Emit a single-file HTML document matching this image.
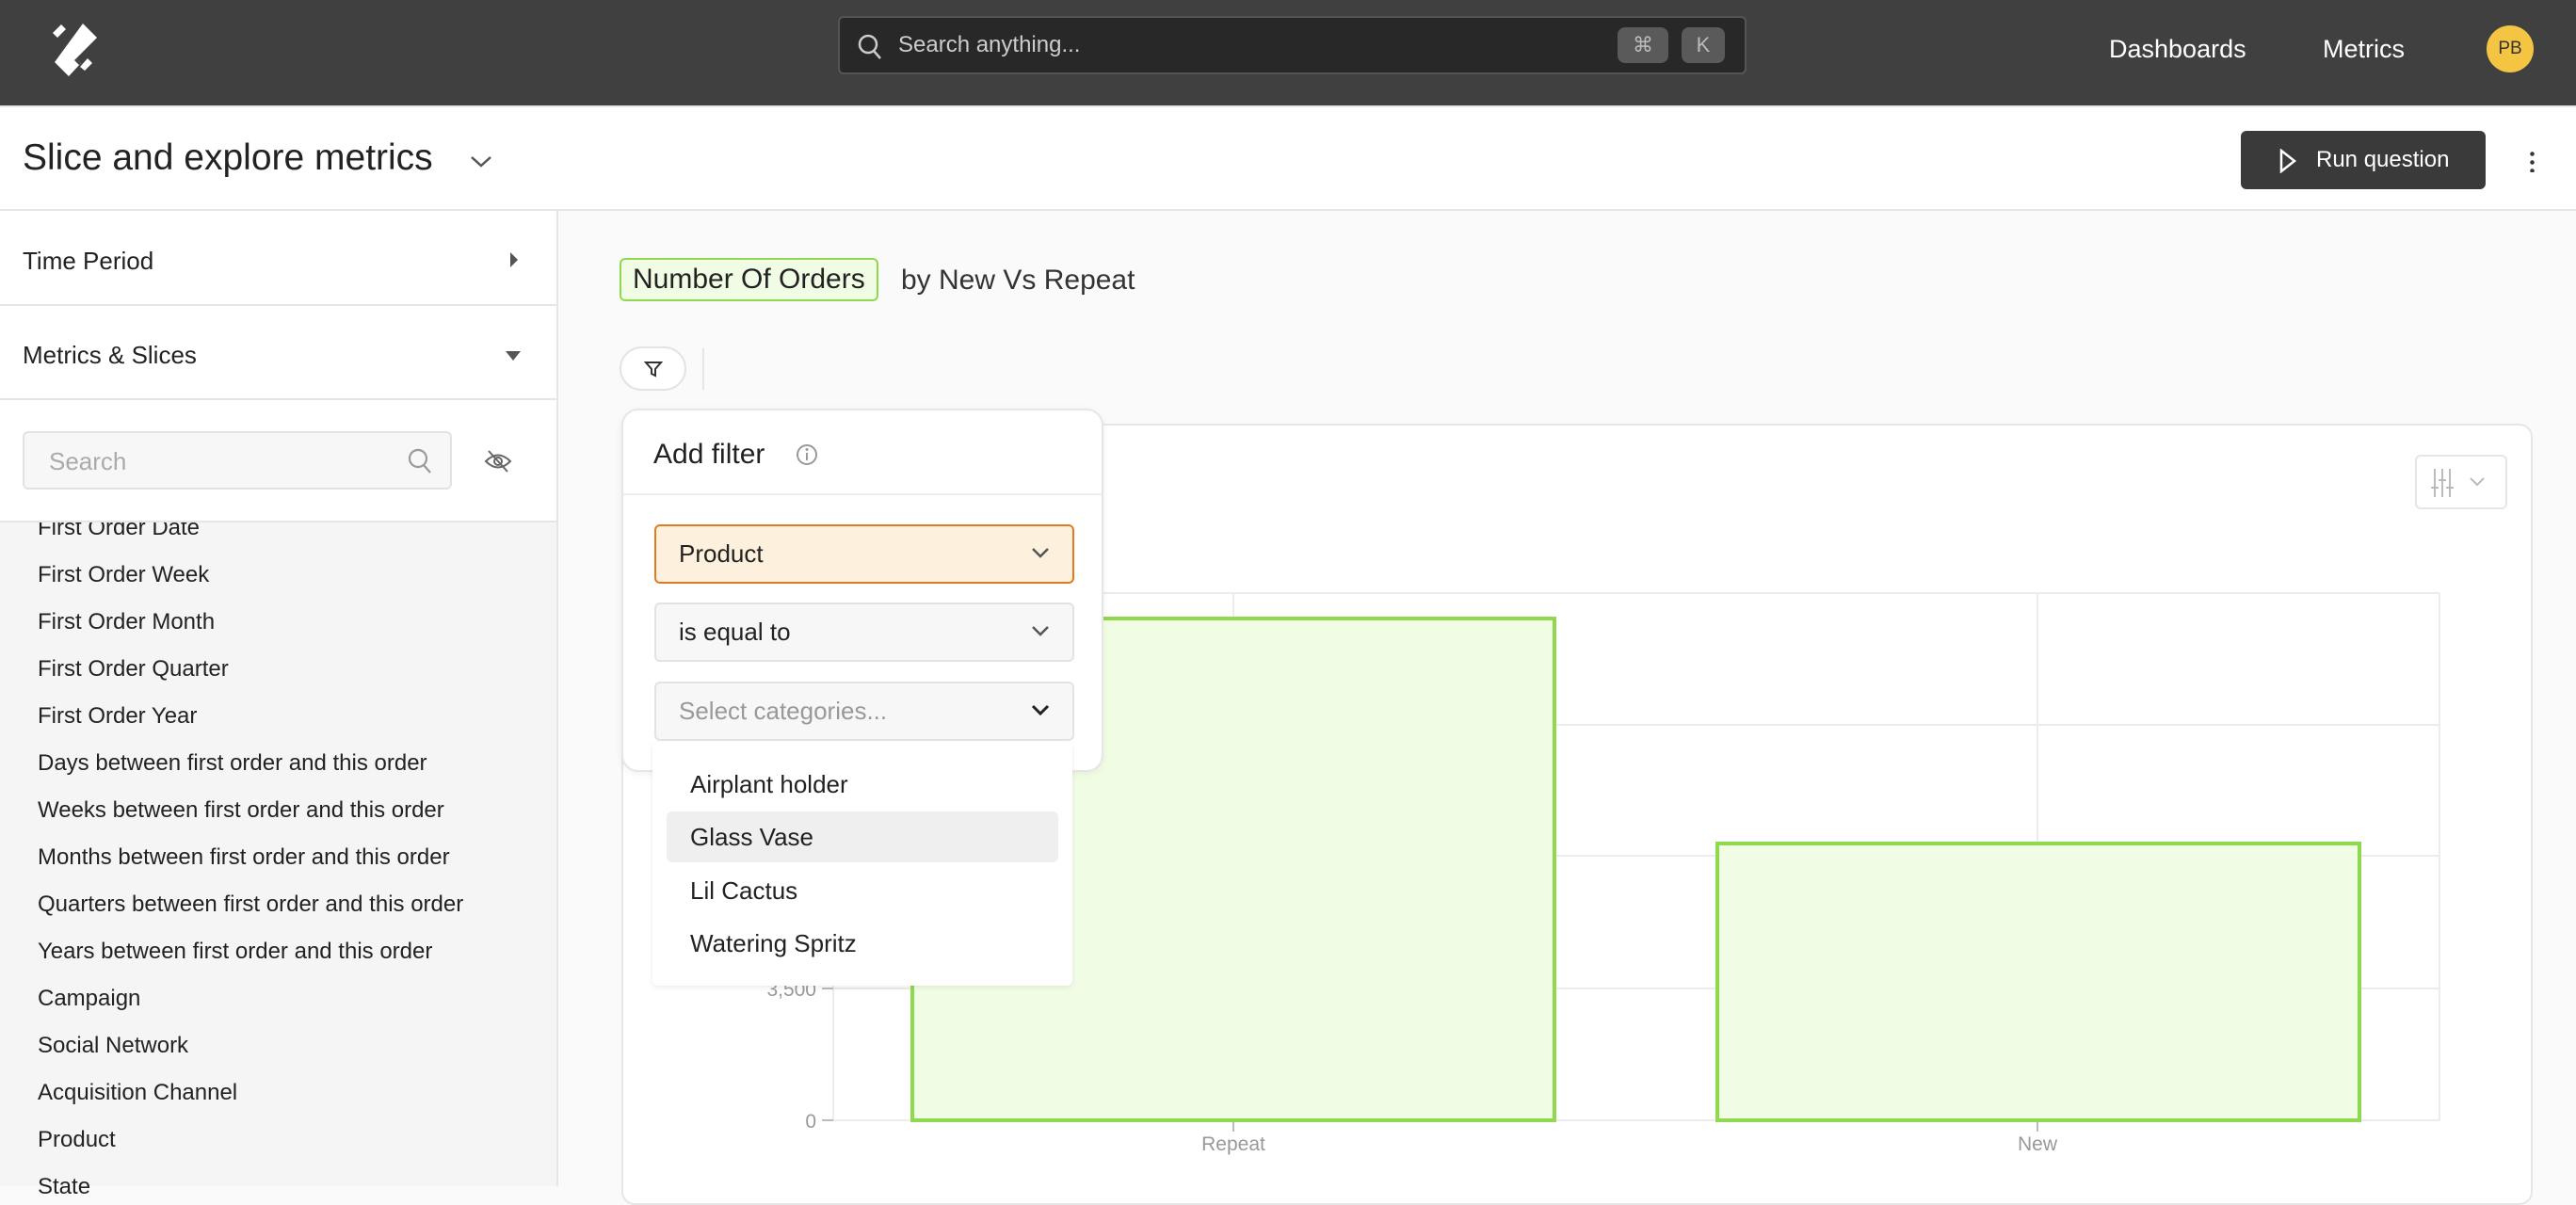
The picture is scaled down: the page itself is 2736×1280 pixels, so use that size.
<!DOCTYPE html>
<html><head><meta charset="utf-8"><style>
*{box-sizing:border-box;margin:0;padding:0}
body{width:2736px;height:1260px;overflow:hidden;font-family:"Liberation Sans",sans-serif;background:#fafafa;position:relative;color:#222}
.abs{position:absolute}
.hdr{left:0;top:0;width:2736px;height:112px;background:#404040}
.srch{left:890px;top:17px;width:965px;height:62px;background:#282828;border:2px solid #555;border-radius:6px}
.kbd{position:absolute;top:10px;height:38px;background:#5a5a5a;border-radius:8px;color:#bbb;font-size:22px;text-align:center;line-height:38px}
.nav{color:#fff;font-size:27px;top:36px}
.tbar{left:0;top:112px;width:2736px;height:112px;background:#fff;border-top:2px solid #e6e6e6;border-bottom:2px solid #e6e6e6}
.side{left:0;top:224px;width:593px;height:1036px;background:#f5f5f5;border-right:2px solid #e6e6e6}
.row{position:absolute;left:0;width:591px;background:#fff;border-bottom:2px solid #e6e6e6}
.row span{position:absolute;left:24px;font-size:26px}
.li{position:absolute;left:40px;font-size:24px;color:#222}
.card{left:660px;top:450px;width:2030px;height:830px;background:#fff;border:2px solid #e6e6e6;border-radius:14px}
.sel{position:absolute;left:33px;width:446px;height:63px;border:2px solid #e3e3e3;border-radius:6px;background:#f7f7f7;font-size:26px;line-height:59px;padding-left:24px}
.chev{position:absolute;right:24px;top:22px}
</style></head><body>
<div class="abs hdr"></div>
<svg class="abs" style="left:50px;top:20px" width="60" height="70" viewBox="50 20 60 70"><g fill="#fff"><polygon points="88,25 103,40 81,62 86,67 73,81 58,66"/><polygon points="56,35 65,26 70,31 61,40"/><polygon points="85,71 93,62 98,67 90,75"/></g><polygon points="81,62 86,67 84,69 79,64" fill="#404040"/></svg>
<div class="abs srch">
<svg class="abs" style="left:18px;top:16px" width="28" height="30" viewBox="0 0 28 30"><circle cx="12" cy="12" r="9" fill="none" stroke="#ccc" stroke-width="2.5"/><line x1="18" y1="19" x2="25" y2="27" stroke="#ccc" stroke-width="2.5"/></svg>
<div class="abs" style="left:62px;top:15px;color:#ccc;font-size:24px">Search anything...</div>
<div class="kbd" style="left:826px;width:54px">⌘</div>
<div class="kbd" style="left:894px;width:46px">K</div>
</div>
<div class="abs nav" style="left:2240px;top:37px">Dashboards</div>
<div class="abs nav" style="left:2467px;top:37px">Metrics</div>
<div class="abs" style="left:2641px;top:27px;width:50px;height:50px;border-radius:50%;background:#f4c542;font-size:19px;text-align:center;line-height:50px;color:#333">PB</div>

<div class="abs tbar">
<div class="abs" style="left:24px;top:32px;font-size:39px;color:#222">Slice and explore metrics</div>
<svg class="abs" style="left:498px;top:50px" width="26" height="16"><polyline points="3,3 13,12 23,3" fill="none" stroke="#555" stroke-width="2.5"/></svg>
<div class="abs" style="left:2380px;top:25px;width:260px;height:62px;background:#3a3a3a;border-radius:6px;color:#fff;font-size:24px;line-height:62px;padding-left:80px">Run question</div>
<svg class="abs" style="left:2420px;top:44px" width="20" height="26"><polygon points="3,2 17,13 3,24" fill="none" stroke="#fff" stroke-width="2.5"/></svg>
<div class="abs" style="left:2687px;top:45px;width:5px;height:24px;background:radial-gradient(circle,#333 2px,transparent 2.5px) 0 0/5px 9px"></div>
</div>

<div class="abs side">
<div class="row" style="top:0;height:101px"><span style="top:38px">Time Period</span><svg class="abs" style="left:540px;top:42px" width="12" height="20"><polygon points="2,2 10,10 2,18" fill="#555"/></svg></div>
<div class="row" style="top:101px;height:100px"><span style="top:37px">Metrics &amp; Slices</span><svg class="abs" style="left:535px;top:46px" width="20" height="14"><polygon points="2,2 18,2 10,12" fill="#555"/></svg></div>
<div class="row" style="top:201px;height:130px">
<div class="abs" style="left:24px;top:33px;width:456px;height:62px;background:#f7f7f7;border:2px solid #e3e3e3;border-radius:6px;color:#aaa;font-size:26px;line-height:60px;padding-left:26px">Search</div>
<svg class="abs" style="left:432px;top:50px" width="28" height="30"><circle cx="12" cy="12" r="9" fill="none" stroke="#999" stroke-width="2.2"/><line x1="18" y1="19" x2="25" y2="27" stroke="#999" stroke-width="2.2"/></svg>
<svg class="abs" style="left:514px;top:52px" width="30" height="26" viewBox="0 0 30 26"><path d="M2 13 Q15 0 28 13 Q15 26 2 13Z" fill="none" stroke="#666" stroke-width="2"/><circle cx="15" cy="13" r="4" fill="none" stroke="#666" stroke-width="2"/><line x1="5" y1="2" x2="25" y2="24" stroke="#666" stroke-width="2"/></svg>
</div>
<div class="li" style="top:323px;clip-path:inset(8px 0 0 0)">First Order Date</div>
<div class="li" style="top:373px">First Order Week</div>
<div class="li" style="top:423px">First Order Month</div>
<div class="li" style="top:473px">First Order Quarter</div>
<div class="li" style="top:523px">First Order Year</div>
<div class="li" style="top:573px">Days between first order and this order</div>
<div class="li" style="top:623px">Weeks between first order and this order</div>
<div class="li" style="top:673px">Months between first order and this order</div>
<div class="li" style="top:723px">Quarters between first order and this order</div>
<div class="li" style="top:773px">Years between first order and this order</div>
<div class="li" style="top:823px">Campaign</div>
<div class="li" style="top:873px">Social Network</div>
<div class="li" style="top:923px">Acquisition Channel</div>
<div class="li" style="top:973px">Product</div>
<div class="li" style="top:1023px">State</div>
</div>

<div class="abs" style="left:658px;top:274px;height:46px;padding:0 12px;background:#f0fde4;border:2px solid #8fd94f;border-radius:6px;font-size:30px;line-height:42px">Number Of Orders</div>
<div class="abs" style="left:957px;top:281px;font-size:30px;color:#333">by New Vs Repeat</div>
<div class="abs" style="left:658px;top:368px;width:71px;height:47px;border:2px solid #e3e3e3;border-radius:24px;background:#fff"></div>
<svg class="abs" style="left:684px;top:382px" width="20" height="20"><path d="M2 3 H18 L12 10 V17 L8 15 V10Z" fill="none" stroke="#333" stroke-width="2"/></svg>
<div class="abs" style="left:746px;top:370px;width:2px;height:44px;background:#e6e6e6"></div>

<div class="abs card">
<div class="abs" style="left:1903px;top:31px;width:98px;height:58px;border:2px solid #e6e6e6;border-radius:6px"></div>
<svg class="abs" style="left:1918px;top:44px" width="70" height="34"><g stroke="#bbb" stroke-width="2" fill="none"><line x1="6" y1="2" x2="6" y2="32"/><line x1="14" y1="2" x2="14" y2="32"/><line x1="22" y1="2" x2="22" y2="32"/><line x1="2" y1="22" x2="10" y2="22"/><line x1="10" y1="14" x2="18" y2="14"/><line x1="18" y1="22" x2="26" y2="22"/><polyline points="44,12 51,19 58,12"/></g></svg>
</div>
<svg class="abs" style="left:0;top:0" width="2736" height="1260">
<g stroke="#ececec" stroke-width="2"><line x1="885" y1="630" x2="2591" y2="630"/><line x1="885" y1="770" x2="2591" y2="770"/><line x1="885" y1="909" x2="2591" y2="909"/><line x1="885" y1="1050" x2="2591" y2="1050"/><line x1="885" y1="1190" x2="2591" y2="1190"/><line x1="1310" y1="630" x2="1310" y2="1190"/><line x1="2164" y1="630" x2="2164" y2="1190"/><line x1="2591" y1="630" x2="2591" y2="1190"/><line x1="885" y1="630" x2="885" y2="1190"/></g>
<g stroke="#bbb" stroke-width="2"><line x1="873" y1="1050" x2="885" y2="1050"/><line x1="873" y1="1190" x2="885" y2="1190"/><line x1="1310" y1="1190" x2="1310" y2="1202"/><line x1="2164" y1="1190" x2="2164" y2="1202"/></g>
<rect x="969" y="657" width="682" height="533" fill="#f0fde4" stroke="#8fd94f" stroke-width="4"/>
<rect x="1824" y="896" width="682" height="294" fill="#f0fde4" stroke="#8fd94f" stroke-width="4"/>
<g fill="#999" font-size="21" font-family="Liberation Sans"><text x="867" y="1058" text-anchor="end">3,500</text><text x="867" y="1198" text-anchor="end">0</text><text x="1310" y="1222" text-anchor="middle">Repeat</text><text x="2164" y="1222" text-anchor="middle">New</text></g>
</svg>

<div class="abs" style="left:660px;top:434px;width:512px;height:386px;background:#fff;border:2px solid #e6e6e6;border-radius:18px;box-shadow:0 2px 8px rgba(0,0,0,.06)">
<div class="abs" style="left:32px;top:30px;font-size:30px">Add filter</div>
<svg class="abs" style="left:182px;top:34px" width="26" height="26"><circle cx="13" cy="13" r="10" fill="none" stroke="#999" stroke-width="2"/><line x1="13" y1="11" x2="13" y2="19" stroke="#999" stroke-width="2"/><circle cx="13" cy="7.5" r="1.5" fill="#999"/></svg>
<div class="abs" style="left:0;top:88px;width:508px;height:2px;background:#eee"></div>
<div class="sel" style="top:121px;background:#fdf0dc;border-color:#e07b24">Product<svg class="chev" width="20" height="14"><polyline points="2,2 10,10 18,2" fill="none" stroke="#555" stroke-width="2.5"/></svg></div>
<div class="sel" style="top:204px">is equal to<svg class="chev" width="20" height="14"><polyline points="2,2 10,10 18,2" fill="none" stroke="#555" stroke-width="2.5"/></svg></div>
<div class="sel" style="top:288px;color:#999">Select categories...<svg class="chev" width="20" height="14"><polyline points="2,2 10,10 18,2" fill="none" stroke="#222" stroke-width="3"/></svg></div>
</div>
<div class="abs" style="left:693px;top:789px;width:446px;height:258px;background:#fff;border-radius:6px;box-shadow:0 2px 6px rgba(0,0,0,.08)">
<div class="abs" style="left:15px;top:73px;width:416px;height:54px;background:#efefef;border-radius:6px"></div>
<div class="abs" style="left:40px;top:29px;font-size:26px">Airplant holder</div>
<div class="abs" style="left:40px;top:85px;font-size:26px">Glass Vase</div>
<div class="abs" style="left:40px;top:142px;font-size:26px">Lil Cactus</div>
<div class="abs" style="left:40px;top:198px;font-size:26px">Watering Spritz</div>
</div>
</body></html>
